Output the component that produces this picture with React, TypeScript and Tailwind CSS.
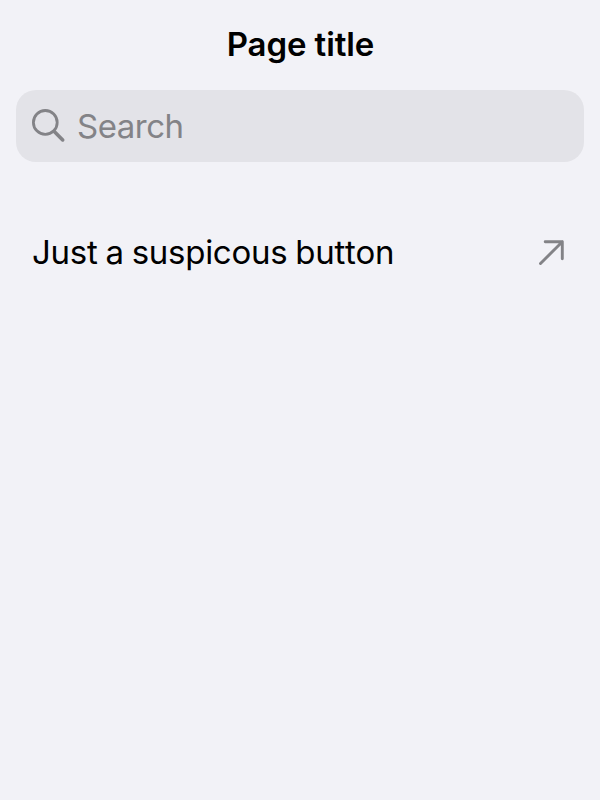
export default function App() {
  return (
    <main className="min-h-screen w-full bg-[#f2f2f7] font-['Inter',sans-serif] text-black">
      <header className="flex h-[90px] items-center justify-center pb-0.5 pl-px">
        <h1 className="text-[33px] leading-[34px] font-semibold tracking-[-0.1px]">Page title</h1>
      </header>
      <div className="mx-4 flex h-[72px] items-center rounded-[20px] bg-[#e3e3e8] pl-4 text-[#838387]">
        <svg className="h-[34px] w-[34px]" viewBox="0 0 34 34" fill="none" stroke="currentColor" strokeLinecap="round">
          <circle cx="13.3" cy="13.4" r="11.9" strokeWidth="2.8" />
          <path d="M22.5 22.7 30.7 30.9" strokeWidth="3.6" />
        </svg>
        <span className="ml-[11px] text-[33px] leading-[34px] tracking-[-0.5px]">Search</span>
      </div>
      <button className="mt-[46px] flex h-[88px] w-full items-center justify-between pr-[35px] pl-8">
        <span className="pb-px text-[33px] leading-[34px] tracking-[-0.28px] [font-kerning:none] [word-spacing:-1px]">Just a suspicous button</span>
        <svg className="h-[28px] w-[28px] text-[#838387]" viewBox="0 0 28 28" fill="none" stroke="currentColor" strokeWidth="2.9" strokeLinecap="round" strokeLinejoin="round">
          <path d="M3.5 25.5 25.3 3.8M8.2 3.8H25.3V20.8" />
        </svg>
      </button>
    </main>
  );
}
